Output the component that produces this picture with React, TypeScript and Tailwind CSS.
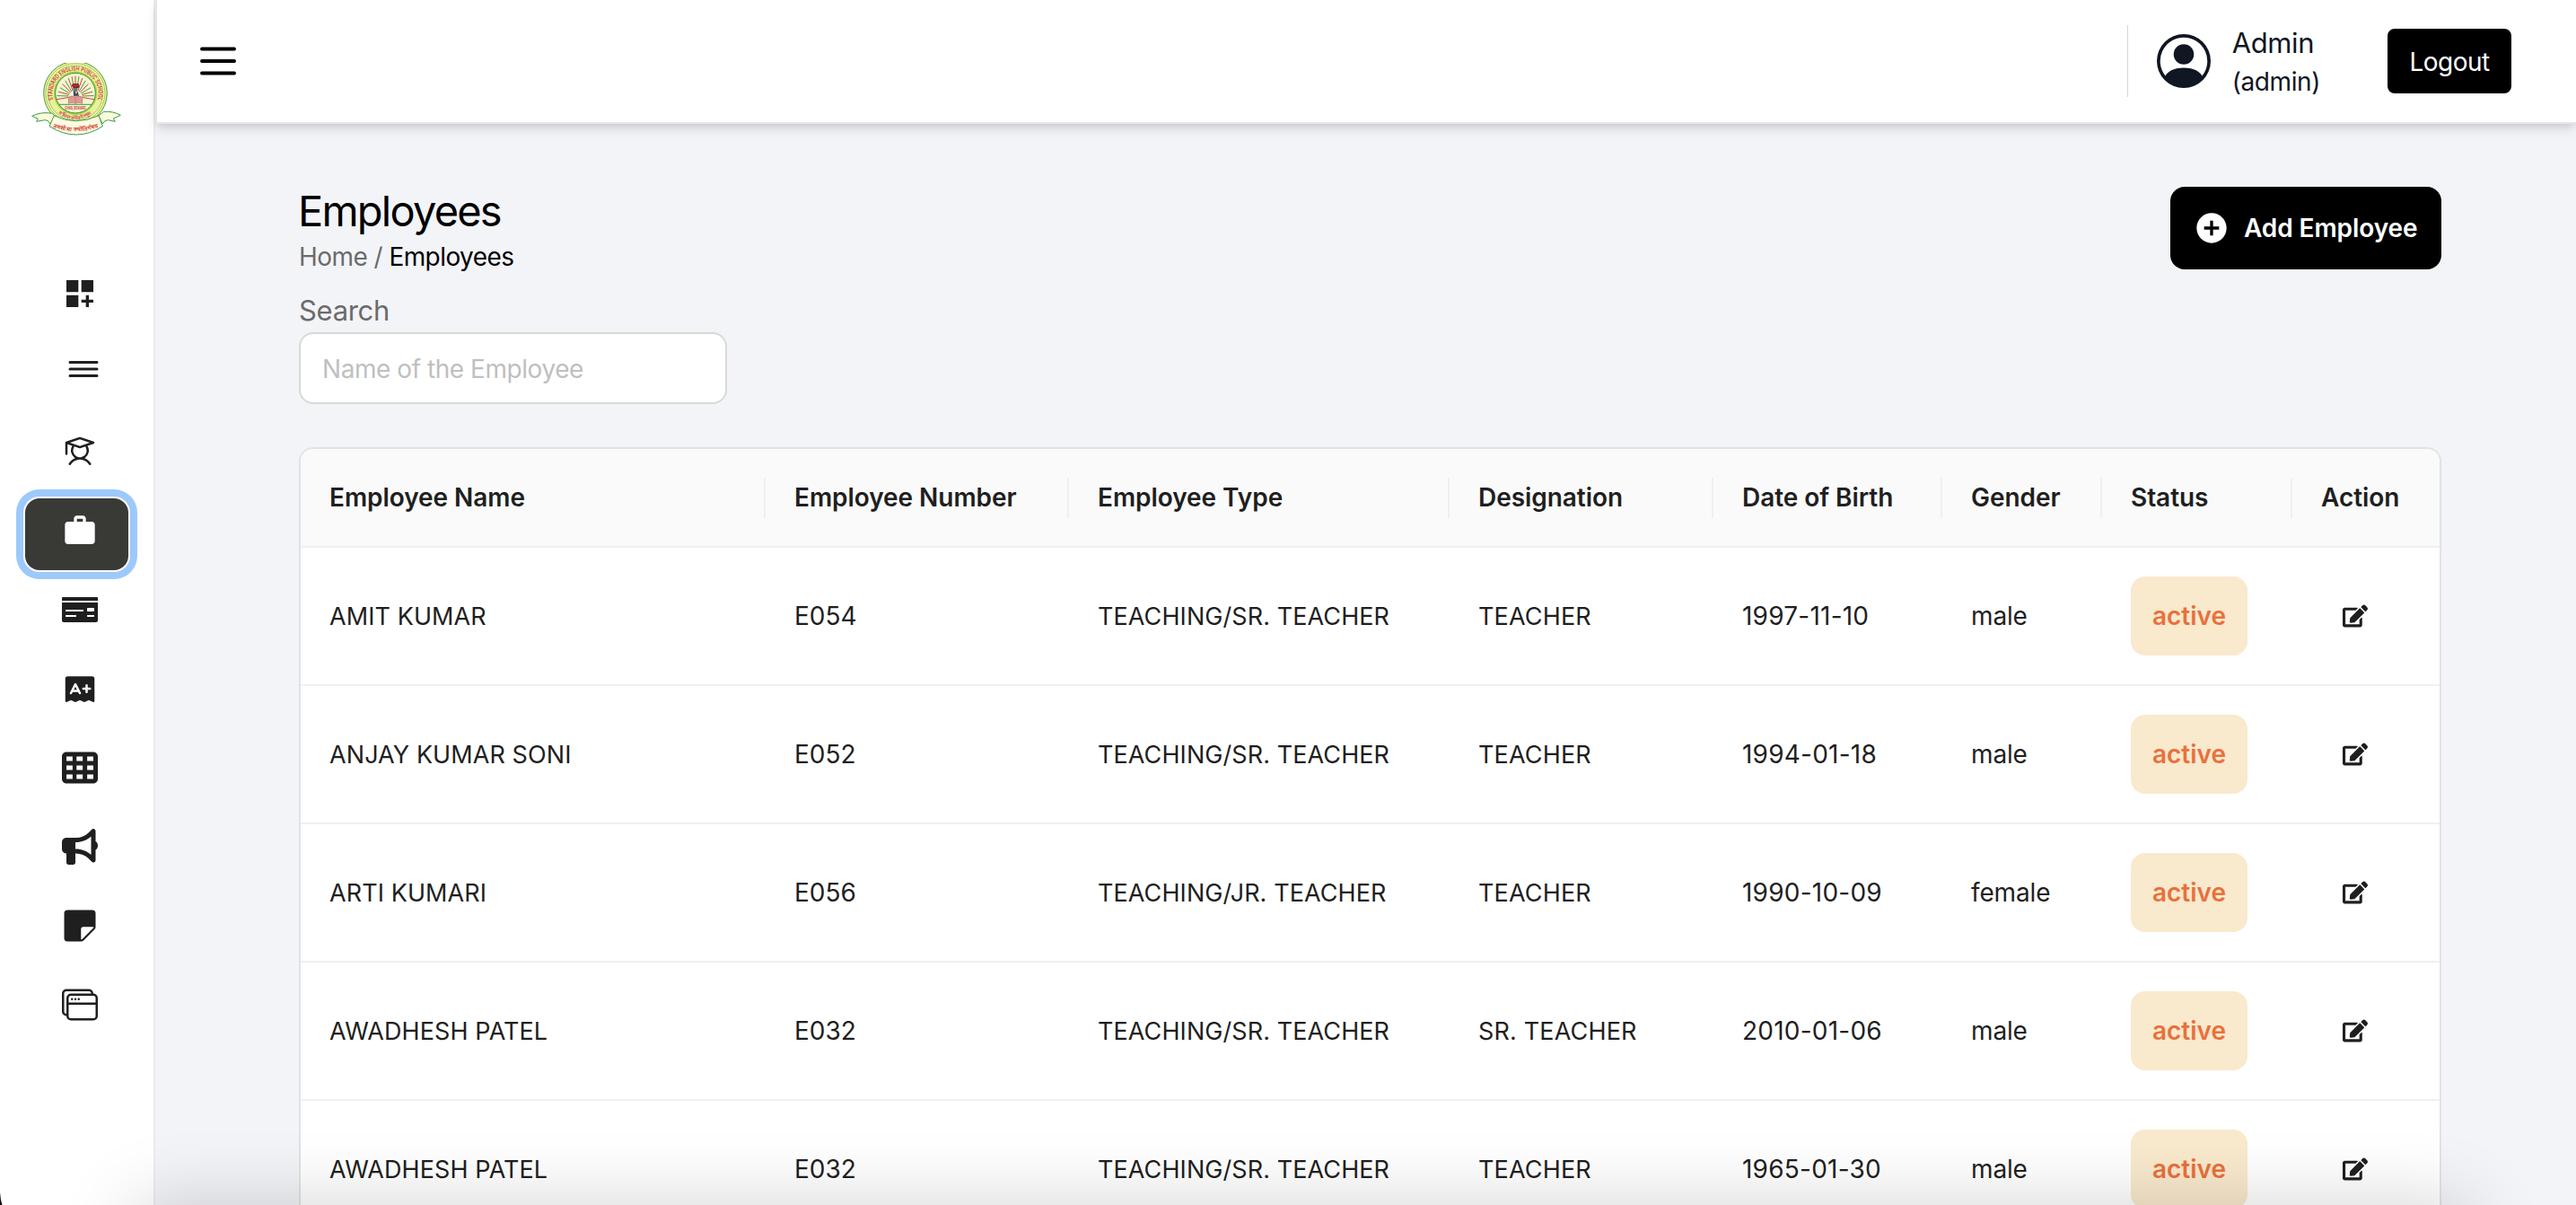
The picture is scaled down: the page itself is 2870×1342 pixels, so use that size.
import type { ReactNode } from "react";
import { MdAddCircle, MdDashboardCustomize, MdWork } from "react-icons/md";
import { IoReorderThreeOutline } from "react-icons/io5";
import { PiExamFill, PiStudent } from "react-icons/pi";
import { FaEdit, FaMoneyCheck } from "react-icons/fa";
import { FaBullhorn, FaTableCells } from "react-icons/fa6";
import { BsPersonCircle, BsStickyFill, BsWindowStack } from "react-icons/bs";

type Employee = {
  name: string;
  number: string;
  type: string;
  designation: string;
  dob: string;
  gender: string;
  status: string;
};

const employees: Employee[] = [
  { name: "AMIT KUMAR", number: "E054", type: "TEACHING/SR. TEACHER", designation: "TEACHER", dob: "1997-11-10", gender: "male", status: "active" },
  { name: "ANJAY KUMAR SONI", number: "E052", type: "TEACHING/SR. TEACHER", designation: "TEACHER", dob: "1994-01-18", gender: "male", status: "active" },
  { name: "ARTI KUMARI", number: "E056", type: "TEACHING/JR. TEACHER", designation: "TEACHER", dob: "1990-10-09", gender: "female", status: "active" },
  { name: "AWADHESH PATEL", number: "E032", type: "TEACHING/SR. TEACHER", designation: "SR. TEACHER", dob: "2010-01-06", gender: "male", status: "active" },
  { name: "AWADHESH PATEL", number: "E032", type: "TEACHING/SR. TEACHER", designation: "TEACHER", dob: "1965-01-30", gender: "male", status: "active" },
];

const columns = [
  "Employee Name",
  "Employee Number",
  "Employee Type",
  "Designation",
  "Date of Birth",
  "Gender",
  "Status",
  "Action",
];

function SchoolLogo() {
  const rays = Array.from({ length: 17 }, (_, i) => {
    const a = Math.PI + (Math.PI * (i + 0.5)) / 17;
    return {
      x1: 147 + Math.cos(a) * 24,
      y1: 118 + Math.sin(a) * 26,
      x2: 147 + Math.cos(a) * 64,
      y2: 128 + Math.sin(a) * (60 + 24 * Math.abs(Math.sin(a))),
      color: i % 2 ? "#3f9a4c" : "#d8403f",
    };
  });
  return (
    <svg viewBox="0 0 300 243" className="h-[81px] w-[100px]" fill="none">
      <defs>
        <path id="arc-top" d="M73 124a77 77 0 1 1 148 0" />
        <path id="arc-bottom" d="M68 137a86 86 0 0 0 158 0" />
        <path id="arc-ribbon" d="M74 216q73 26 148 0" />
        <clipPath id="disc"><circle cx="147" cy="101" r="67" /></clipPath>
      </defs>
      <circle cx="147" cy="101" r="106" fill="#f8f08c" stroke="#3c9a50" strokeWidth="3" />
      <circle cx="147" cy="101" r="99" fill="#fbf6a4" stroke="#6db35c" strokeWidth="2" />
      <circle cx="147" cy="101" r="92" fill="#ebf09a" stroke="#6db35c" strokeWidth="2" />
      <circle cx="147" cy="101" r="73" fill="#b6d840" />
      <circle cx="147" cy="101" r="67" fill="#f4f5cf" stroke="#2f9150" strokeWidth="3" />
      <g clipPath="url(#disc)">
        {rays.map((r, i) => (
          <line key={i} x1={r.x1} y1={r.y1} x2={r.x2} y2={r.y2} stroke={r.color} strokeWidth="3" />
        ))}
        <path d="M82 139h130" stroke="#3c9a50" strokeWidth="3" />
      </g>
      <path d="M124 114q12-6 23 0q12-6 23 0v22q-11-6-23 0q-11-6-23 0z" fill="#d99a93" stroke="#c46b66" strokeWidth="2" />
      <path d="M147 114v22" stroke="#c46b66" strokeWidth="2" />
      <path d="M139 84h15l-3 26h-10z" fill="#6c7280" />
      <path d="M141 96h14l4 14h-18z" fill="#3b4768" />
      <circle cx="150" cy="99" r="4" fill="#d9b24a" />
      <path d="M134 74l8-5h14l4 5-2 9h-18z" fill="#1d1414" />
      <path d="M136 74q9-8 22-3l1 7q-8 5-22 2z" fill="#b9262d" />
      <text x="147" y="155" textAnchor="middle" fontSize="14" fontWeight="700" fill="#cf3b38" textLength="70" lengthAdjust="spacingAndGlyphs">CHAS, BOKARO</text>
      <text fontSize="20" fontWeight="600" fill="#cf3f4c">
        <textPath href="#arc-top" startOffset="50%" textAnchor="middle" textLength="284" lengthAdjust="spacingAndGlyphs">STANDARD ENGLISH PUBLIC SCHOOL</textPath>
      </text>
      <text fontSize="16" fontWeight="700" fill="#cf5f6c">
        <textPath href="#arc-bottom" startOffset="50%" textAnchor="middle">सीनियर सेकेंडरी स्कूल</textPath>
      </text>
      <path d="M2 178q30-16 68-9l9 10-16 25q-6-14-18-13l-28 5 5-9zM298 175q-24-14-56-12l-18 14 14 27q4-12 18-13l24 5-6-10z" fill="#fbfad9" stroke="#3c9a50" strokeWidth="3" strokeLinejoin="round" />
      <path d="M60 212l16-36q71 36 149 0l13 36q-88 56-178 0z" fill="#fdfbe0" stroke="#3c9a50" strokeWidth="3" strokeLinejoin="round" />
      <text fontSize="19" fontWeight="600" fill="#cf3f38">
        <textPath href="#arc-ribbon" startOffset="50%" textAnchor="middle">तमसो मा ज्योतिर्गमय</textPath>
      </text>
    </svg>
  );
}

function NavItem({ children, active = false }: { children: ReactNode; active?: boolean }) {
  return (
    <button
      className={
        active
          ? "flex h-20 w-[115px] items-start rounded-[16px] bg-[#393a36] pt-4 pl-[41px] text-white ring-8 ring-[#9ec9fb] ring-offset-2 ring-offset-white"
          : "flex h-20 w-[115px] items-start rounded-[16px] pt-4 pl-[41px] text-[#1f1f1f]"
      }
    >
      {children}
    </button>
  );
}

function Sidebar() {
  return (
    <aside className="flex w-[173px] shrink-0 flex-col border-r-2 border-[#ebebeb] bg-white">
      <div className="pt-[70px] pl-[35px]">
        <SchoolLogo />
      </div>
      <nav className="mt-[140px] flex flex-col gap-2 pl-7">
        <NavItem><MdDashboardCustomize className="size-10 shrink-0" /></NavItem>
        <NavItem><IoReorderThreeOutline className="-mt-2 size-12 shrink-0" /></NavItem>
        <NavItem><PiStudent className="size-10 shrink-0" /></NavItem>
        <NavItem active><MdWork className="size-10 shrink-0" /></NavItem>
        <NavItem><FaMoneyCheck className="size-10 shrink-0" /></NavItem>
        <NavItem><PiExamFill className="size-10 shrink-0" /></NavItem>
        <NavItem><FaTableCells className="size-10 shrink-0" /></NavItem>
        <NavItem><FaBullhorn className="size-10 shrink-0" /></NavItem>
        <NavItem><BsStickyFill className="size-10 shrink-0" /></NavItem>
        <NavItem><BsWindowStack className="size-10 shrink-0" /></NavItem>
      </nav>
    </aside>
  );
}

function Header() {
  return (
    <header className="flex h-[138px] shrink-0 items-center border-b-2 border-l-2 border-[#e5e6eb] bg-white pr-[72px] pl-[41px] shadow-[0_8px_14px_-2px_rgba(0,0,0,0.1),0_4px_8px_-2px_rgba(0,0,0,0.1)]">
      <svg viewBox="0 0 24 24" className="size-[54px]" fill="none" stroke="black" strokeWidth="1.75" strokeLinecap="round">
        <path d="M4 6h16M4 12h16M4 18h16" />
      </svg>
      <div className="ml-auto flex h-20 items-center border-l border-[#d1d5db] pl-8 text-[#101622]">
        <BsPersonCircle className="size-[60px]" />
        <div className="ml-6 pt-0.5">
          <div className="text-[31px] leading-[44px] tracking-[-0.012em]">Admin</div>
          <div className="text-[28px] leading-[42px] tracking-[-0.0145em]">(admin)</div>
        </div>
      </div>
      <button className="ml-[75px] h-[72px] w-[138px] rounded-lg bg-black pt-px text-[28px] tracking-[-0.0188em] text-white">
        Logout
      </button>
    </header>
  );
}

function EmployeeTable() {
  return (
    <div className="mt-12 overflow-hidden rounded-t-[16px] border-2 border-b-0 border-[#e0e2e7] bg-white text-[#1f1f1f]">
      <table className="w-full table-fixed border-separate border-spacing-0 text-left text-[28px] leading-[45px]">
        <colgroup>
          <col className="w-[518px]" />
          <col className="w-[338px]" />
          <col className="w-[424px]" />
          <col className="w-[294px]" />
          <col className="w-[255px]" />
          <col className="w-[178px]" />
          <col className="w-[212px]" />
          <col className="w-[164px]" />
        </colgroup>
        <thead>
          <tr className="h-[110px] bg-[#fafafa]">
            {columns.map((c, i) => (
              <th key={c} className="border-b-2 border-[#f0f0f0] p-0 font-semibold tracking-[-0.002em]">
                <div className={i < columns.length - 1 ? "border-r-2 border-[#f0f0f0] pl-8" : "pl-8"}>{c}</div>
              </th>
            ))}
          </tr>
        </thead>
        <tbody>
          {employees.map((e, i) => (
            <tr key={i} className="h-[154px]">
              <td className="border-b-2 border-[#f0f0f0] py-0 pr-0 pl-8 text-[27px] tracking-[0.003em]">{e.name}</td>
              <td className="border-b-2 border-[#f0f0f0] py-0 pr-0 pl-8">{e.number}</td>
              <td className="border-b-2 border-[#f0f0f0] py-0 pr-0 pl-8 text-[27px] tracking-[0.003em]">{e.type}</td>
              <td className="border-b-2 border-[#f0f0f0] py-0 pr-0 pl-8 text-[27px] tracking-[0.006em]">{e.designation}</td>
              <td className="border-b-2 border-[#f0f0f0] py-0 pr-0 pl-8 tracking-[0.008em]">{e.dob}</td>
              <td className="border-b-2 border-[#f0f0f0] py-0 pr-0 pl-8 tracking-[-0.005em]">{e.gender}</td>
              <td className="border-b-2 border-[#f0f0f0] py-0 pr-0 pl-8">
                <span className="flex h-[88px] w-[130px] items-center justify-center rounded-[16px] bg-[#f9e9cd] font-semibold text-[#e8713c]">
                  {e.status}
                </span>
              </td>
              <td className="border-b-2 border-[#f0f0f0] py-0 pr-0 pl-14">
                <FaEdit className="size-7" />
              </td>
            </tr>
          ))}
        </tbody>
      </table>
    </div>
  );
}

export default function App() {
  return (
    <div className="relative flex h-[1342px] w-full overflow-hidden bg-[#f3f4f8] font-['Inter',sans-serif]">
      <Sidebar />
      <div className="flex min-w-0 flex-1 flex-col">
        <Header />
        <main className="pt-[70px] pr-[150px] pl-40">
          <div className="flex items-start justify-between">
            <div>
              <h1 className="-ml-px pt-px text-[47px] leading-[52px] font-normal tracking-[-0.038em] text-black">Employees</h1>
              <div className="mt-[5px] text-[28px] leading-10 tracking-[-0.02em] text-[#6b6b6b]">
                Home / <span className="text-black">Employees</span>
              </div>
            </div>
            <button className="flex h-[92px] w-[302px] items-center rounded-[16px] bg-black pl-[26px] text-[28px] font-semibold tracking-[-0.003em] text-white">
              <MdAddCircle className="size-10" />
              <span className="ml-4">Add Employee</span>
            </button>
          </div>
          <label className="mt-4 block w-[477px]">
            <span className="block text-[31px] leading-[48px] tracking-[-0.01em] text-[#6b6b6b]">Search</span>
            <input
              placeholder="Name of the Employee"
              className="block h-20 w-full rounded-[16px] border-2 border-[#d9d9d9] bg-white px-6 pt-px text-[28px] tracking-[-0.016em] placeholder:text-[#bfbfbf]"
            />
          </label>
          <EmployeeTable />
        </main>
      </div>
      <div className="pointer-events-none absolute top-full right-[120px] left-[150px] h-24 shadow-[0_0_84px_rgba(0,0,0,0.18)]" />
      <svg viewBox="0 0 3 14" className="absolute bottom-0 left-0 h-3.5 w-[3px]">
        <path d="M0 0Q0.5 8 2.5 14H0z" fill="#1a1013" />
      </svg>
    </div>
  );
}
